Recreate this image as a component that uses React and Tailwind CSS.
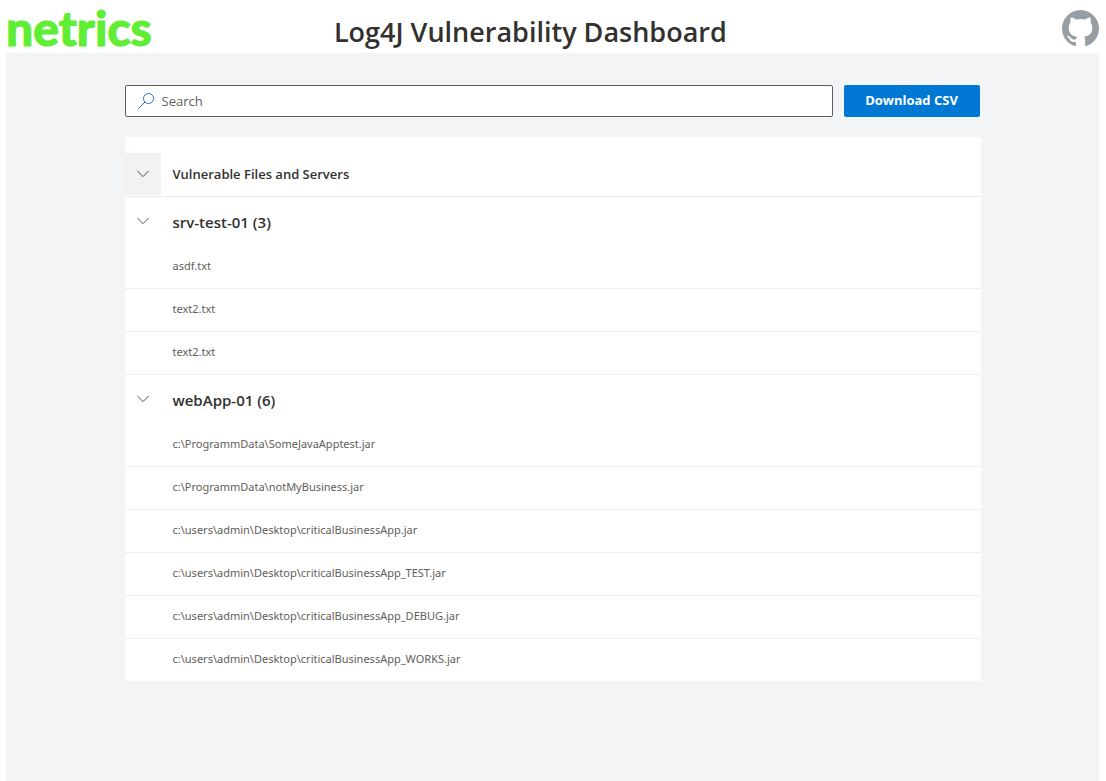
import { useState } from "react";

const SERVERS = [
  { name: "srv-test-01", files: ["asdf.txt", "text2.txt", "text2.txt"] },
  {
    name: "webApp-01",
    files: [
      "c:\\ProgrammData\\SomeJavaApptest.jar",
      "c:\\ProgrammData\\notMyBusiness.jar",
      "c:\\users\\admin\\Desktop\\criticalBusinessApp.jar",
      "c:\\users\\admin\\Desktop\\criticalBusinessApp_TEST.jar",
      "c:\\users\\admin\\Desktop\\criticalBusinessApp_DEBUG.jar",
      "c:\\users\\admin\\Desktop\\criticalBusinessApp_WORKS.jar",
    ],
  },
];

function Chevron({ open }) {
  return (
    <svg
      viewBox="0 0 12 8"
      className={open ? "h-2 w-3" : "h-2 w-3 -rotate-90"}
      fill="none"
      stroke="currentColor"
      aria-hidden="true"
    >
      <path d="M0.4 1 6 6.6 11.6 1" />
    </svg>
  );
}

function Header() {
  return (
    <header className="flex h-[53px] items-start">
      <div className="w-[30%]">
        <a
          href="#home"
          className="block font-[Lato] text-[48px] leading-[56px] font-black text-[#5fee34] [-webkit-text-stroke:1px_#5fee34]"
        >
          netrics
        </a>
      </div>
      <h1 className="pt-3 text-[27px] leading-10 font-semibold whitespace-nowrap text-[#323130]">
        Log4J Vulnerability Dashboard
      </h1>
      <a href="#github" aria-label="GitHub" className="mt-[10px] ml-auto text-[#959da5]">
        <svg viewBox="0 0 16 16" className="size-[37px]" fill="currentColor" aria-hidden="true">
          <path d="M8 0C3.58 0 0 3.58 0 8c0 3.54 2.29 6.53 5.47 7.59.4.07.55-.17.55-.38 0-.19-.01-.82-.01-1.49-2.01.37-2.53-.49-2.69-.94-.09-.23-.48-.94-.82-1.13-.28-.15-.68-.52-.01-.53.63-.01 1.08.58 1.23.82.72 1.21 1.87.87 2.33.66.07-.52.28-.87.51-1.07-1.78-.2-3.64-.89-3.64-3.95 0-.87.31-1.59.82-2.15-.08-.2-.36-1.02.08-2.12 0 0 .67-.21 2.2.82.64-.18 1.32-.27 2-.27s1.36.09 2 .27c1.53-1.04 2.2-.82 2.2-.82.44 1.1.16 1.92.08 2.12.51.56.82 1.27.82 2.15 0 3.07-1.87 3.75-3.65 3.95.29.25.54.73.54 1.48 0 1.07-.01 1.93-.01 2.2 0 .21.15.46.55.38A8.01 8.01 0 0 0 16 8c0-4.42-3.58-8-8-8Z" />
        </svg>
      </a>
    </header>
  );
}

function Toolbar({ query, onQuery }) {
  return (
    <div className="flex gap-[11px] pr-px">
      <label className="flex h-8 flex-1 items-center gap-2 rounded-xs border border-[#605e5c] bg-white px-3">
        <svg
          viewBox="0 0 16 16"
          className="size-4 shrink-0 text-[#2b6fd6]"
          fill="none"
          stroke="currentColor"
          aria-hidden="true"
        >
          <circle cx="10.5" cy="5.5" r="5" />
          <path d="M7 9 0.5 15.5" />
        </svg>
        <input
          type="text"
          aria-label="Search"
          placeholder="Search"
          value={query}
          onChange={(e) => onQuery(e.target.value)}
          className="w-full min-w-0 bg-transparent pt-0.5 text-[13px] text-[#323130] outline-none placeholder:text-[#605e5c]"
        />
      </label>
      <button
        type="button"
        className="h-8 w-[136px] rounded-xs bg-[#0078d4] text-[13px] font-bold text-white"
      >
        Download CSV
      </button>
    </div>
  );
}

function Group({ server, files, open, onToggle }) {
  return (
    <tbody className="border-b border-[#f0efee] last:border-b-0">
      <tr className="h-[49px]">
        <td className="p-0">
          <button
            type="button"
            aria-label={"Toggle " + server.name}
            aria-expanded={open}
            onClick={onToggle}
            className="flex h-12 w-9 items-center justify-center text-[#4a5560]"
          >
            <Chevron open={open} />
          </button>
        </td>
        <th scope="rowgroup" className="p-0 pt-0.5 pl-3 text-left text-[15px] font-semibold">
          {server.name} ({files.length})
        </th>
      </tr>
      {open &&
        files.map((file, i) => (
          <tr key={i} className="h-[43px] border-b border-[#f0efee] last:border-b-0">
            <td className="p-0" />
            <td className="p-0 pb-px pl-3 font-['Noto_Sans',sans-serif] text-[11px] text-[#605e5c]">
              {file}
            </td>
          </tr>
        ))}
    </tbody>
  );
}

export default function App() {
  const [query, setQuery] = useState("");
  const [closed, setClosed] = useState({});
  const toggle = (key) => setClosed((c) => ({ ...c, [key]: !c[key] }));

  return (
    <div className="flex min-h-screen flex-col bg-white pr-[7px] pl-[6px] font-['Open_Sans','Noto_Sans',sans-serif] text-[#323130]">
      <Header />
      <main className="flex-1 bg-[#f3f4f6] py-8">
        <div className="mx-auto flex w-full max-w-[856px] flex-col gap-5">
          <Toolbar query={query} onQuery={setQuery} />
          <div className="bg-white pt-4">
            <table className="w-full border-collapse">
              <thead>
                <tr className="h-[43px] border-b border-[#edebe9]">
                  <th className="w-9 p-0 align-top">
                    <button
                      type="button"
                      aria-label="Toggle all groups"
                      aria-expanded={!closed.all}
                      onClick={() => toggle("all")}
                      className="flex h-[42px] w-9 items-center justify-center bg-[#f3f2f1] text-[#4a4846]"
                    >
                      <Chevron open={!closed.all} />
                    </button>
                  </th>
                  <th scope="col" className="p-0 pl-3 text-left text-[13px] font-semibold">
                    Vulnerable Files and Servers
                  </th>
                </tr>
              </thead>
              {SERVERS.map((server) => (
                <Group
                  key={server.name}
                  server={server}
                  files={server.files.filter((f) => f.toLowerCase().includes(query.toLowerCase()))}
                  open={!closed.all && !closed[server.name]}
                  onToggle={() => toggle(server.name)}
                />
              ))}
            </table>
          </div>
        </div>
      </main>
    </div>
  );
}
